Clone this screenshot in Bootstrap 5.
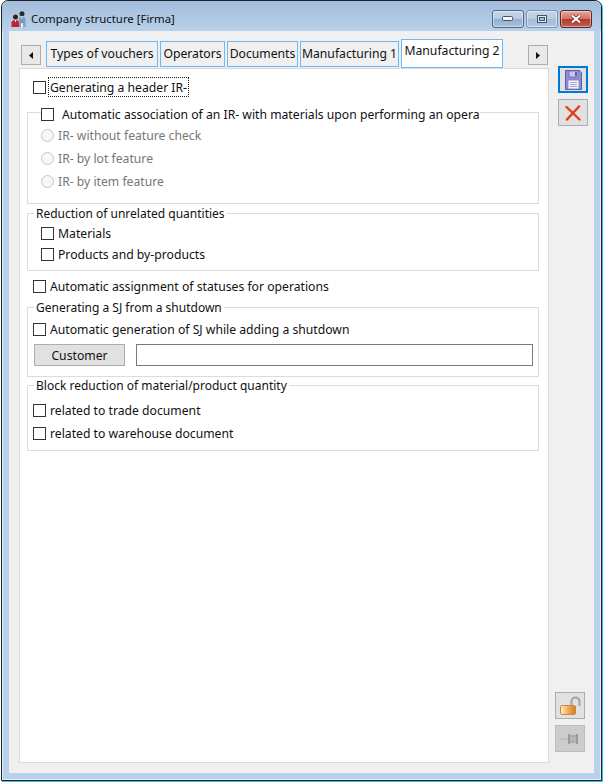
<!DOCTYPE html>
<html lang="en">
<head>
  <meta charset="UTF-8">
  <meta name="viewport" content="width=device-width, initial-scale=1.0">
  <title>Company structure [Firma]</title>
  <link href="https://cdn.jsdelivr.net/npm/bootstrap@5.3.2/dist/css/bootstrap.min.css" rel="stylesheet">
  <style>
    html,body{height:100%}
    body{background:#fff;color:#111;font-family:"Noto Sans",sans-serif;font-size:12.2px;line-height:18px;overflow:hidden}
    /* window frame */
    .win{width:601px;height:781px;margin-left:1px;border:1px solid #1d2128;border-radius:7px 7px 0 0;background:#b9d1ea;
      box-shadow:inset 0 0 0 1px #e8eef5,1px 1px 0 #35c4dc;padding:0 7px 6px 7px}
    .titlebar{height:30px;margin:0 -7px;padding:0 9px;border-radius:6px 6px 0 0;background:linear-gradient(#a3bddb,#b9d1ea)}
    .titlebar .ttl{margin-left:4px;margin-top:9px;font-size:11.4px}
    .cap-btn{width:32px;height:18px;border:1px solid #55677f;border-radius:3px;background:linear-gradient(#c8d8ea 0,#b4cae2 48%,#94b0d0 52%,#a9c2de 100%);box-shadow:inset 0 0 0 1px rgba(255,255,255,.45)}
    .cap-btn.cap-off{border-color:#7f93ac;background:linear-gradient(#c5d6e9 0,#b5cbe3 50%,#a3bcd9 52%,#b2c9e2 100%)}
    .cap-btn.cap-x{border-color:#5b2222;background:linear-gradient(#e3a79e 0,#cf7468 48%,#b23a2c 52%,#c4604f 100%)}
    .caps{margin-top:9px;gap:2px}
    .client{height:742px;background:#f0f0f0;padding:0 0 10px 10px}
    /* tabs */
    .left-col{width:530px}
    .tabrow{height:37px;padding-top:8px}
    .arrow-btn{width:20px;height:20px;margin-top:6px;border:1px solid #adadad;background:#e8e8e8;padding:0}
    .arrow-btn.a-left{margin-left:2px;margin-right:5px}
    .arrow-btn.a-right{margin-right:1px}
    .tabs-strip{gap:2px;border:0;flex-wrap:nowrap}
    .tabs-strip .nav-link{height:26px;margin:2px 0 0;padding:0;border:1px solid #6db8f7;border-radius:0;background:#f0f0f0;color:#111;text-align:center;line-height:23px;white-space:nowrap;font-size:12.2px}
    .tabs-strip .nav-link.active{height:29px;margin-top:0;background:#fff;color:#111;border-color:#6db8f7;position:relative;z-index:2;line-height:21px}
    .tw1{width:112px}.tw2{width:65px}.tw3{width:71px}.tw4{width:99px}.tw5{width:102px}
    .page{height:695px;background:#fff;border:1px solid #d9d9d9;padding:0 9px 0 7px}
    /* form bits */
    .chk-row{display:flex;align-items:center;height:18px;white-space:nowrap}
    .chk-row > span{padding-top:2px}
    .form-check-input.box{width:13px;height:13px;margin:0 4px 0 0;flex:none;border:1px solid #333;border-radius:0;background-color:#fff}
    .form-check-input.rad{width:13px;height:13px;margin:0 4px 0 0;flex:none;border:1px solid #c6c6c6;background-color:#f7f7f7;opacity:1}
    .chk-row > span.focus-lbl{outline:1px dotted #222;padding:0 1px;margin-left:-1px;height:18px;line-height:20px}
    .off-txt{color:#777}
    .grp{border:1px solid #dcdcdc;padding:0;margin:0}
    .grp legend{float:none;width:auto;font-size:12px;line-height:14px;margin:0 0 0 6px;padding:2px 2px 0}
    .grp legend.leg-chk{display:flex;align-items:center;margin-left:13px;padding:4px 0 0;line-height:16px;white-space:nowrap;font-size:12.2px}
    .grp legend.leg-chk .box{margin-right:8px}
    .grp legend.leg-chk span{padding-top:1px;height:16px;line-height:16px}
    .grp legend + *{clear:none}
    .top-row{margin:9px 0 0 6px}
    .g1{margin-top:6px}
    .g1 .g-in{padding:4px 0 13px 13px}
    .g1 .chk-row + .chk-row{margin-top:5px}
    .g2{margin-top:1px}
    .g2 .g-in{padding:3px 0 7px 13px}
    .g2 .chk-row + .chk-row{margin-top:3px}
    .mid-row{margin:6px 0 0 6px}
    .g3{margin-top:4px}
    .g3 .g-in{padding:5px 5px 10px 5px}
    .cust-line{margin-top:6px;padding-left:1px;gap:11px}
    .cust-btn{width:91px;height:22px;padding:0;border:1px solid #adadad;border-radius:0;background:#e1e1e1;color:#111;font-size:12.2px;line-height:22px}
    .cust-inp{height:22px;padding:0 3px;border:1px solid #7a7a7a;border-radius:0;font-size:12px}
    .g4 .g-in{padding:8px 0 8px 5px}
    .g4 .chk-row + .chk-row{margin-top:5px}
    /* side tools */
    .side-col{width:45px}
    .tool-btn{width:30px;height:27px;padding:0;border:1px solid #adadad;border-radius:0;background:#e1e1e1;display:flex;align-items:center;justify-content:center}
    .tool-save{margin:35px 0 0 9px;border:2px solid #0078d7}
    .tool-cancel{margin:6px 0 0 9px}
    .tool-lock{margin:auto 0 0 6px}
    .tool-pin{margin:6px 0 11px 6px;background:#ccc;border-color:#bdbdbd}
  </style>
</head>
<body>
  <div class="win">
    <!-- TITLE BAR -->
    <div class="titlebar d-flex">
      <svg class="mt-auto mb-1" width="16" height="16" viewBox="0 0 16 16">
        <circle cx="4.500" cy="6" r="2.500" fill="#3a1f1a"/>
        <path d="M.5 16V11.500C.5 10 2.200 9 4.500 9S8 10 8 11.500V16z" fill="#c5202c"/>
        <path d="M3.700 9h1.600l-.8 2.500z" fill="#fff"/>
        <circle cx="11" cy="2.800" r="2.500" fill="#2a2a2a"/>
        <path d="M8 16V8C8 6.500 9.200 5.800 11 5.800s3.500.7 3.500 2.200V16z" fill="#7f9fc0"/>
        <path d="M10 5.800h2V16h-2z" fill="#eef3f8"/>
        <path d="M10.600 6.500h.8l.3 5-.7 1-.7-1z" fill="#2b5f96"/>
      </svg>
      <span class="ttl">Company structure [Firma]</span>
      <div class="caps ms-auto d-flex">
        <div class="cap-btn d-flex align-items-center justify-content-center">
          <svg width="12" height="6" viewBox="0 0 12 6"><rect x=".5" y=".5" width="10" height="4" rx="1" fill="#f4f6f9" stroke="#44546a"/></svg>
        </div>
        <div class="cap-btn cap-off d-flex align-items-center justify-content-center">
          <svg width="11" height="9" viewBox="0 0 11 9"><rect x=".5" y=".5" width="9" height="7" fill="#e4ebf3" stroke="#44546a"/><rect x="2.500" y="2.500" width="5" height="3" fill="#a9bfd8" stroke="#44546a"/></svg>
        </div>
        <div class="cap-btn cap-x d-flex align-items-center justify-content-center">
          <svg width="14" height="10" viewBox="0 0 14 10"><path d="M3 1.500l8 7M11 1.500l-8 7" stroke="#5d2a2a" stroke-width="3.600"/><path d="M3 1.500l8 7M11 1.500l-8 7" stroke="#fff" stroke-width="2.200"/></svg>
        </div>
      </div>
    </div>

    <!-- CLIENT -->
    <div class="client d-flex">
      <div class="left-col d-flex flex-column">
        <div class="tabrow d-flex">
          <button class="arrow-btn a-left d-flex align-items-center justify-content-center">
            <svg width="4" height="7" viewBox="0 0 4 7"><path d="M4 0v7L0 3.500z" fill="#111"/></svg>
          </button>
          <ul class="nav nav-tabs tabs-strip">
            <li class="nav-item"><a class="nav-link tw1" href="#">Types of vouchers</a></li>
            <li class="nav-item"><a class="nav-link tw2" href="#">Operators</a></li>
            <li class="nav-item"><a class="nav-link tw3" href="#">Documents</a></li>
            <li class="nav-item"><a class="nav-link tw4" href="#">Manufacturing 1</a></li>
            <li class="nav-item"><a class="nav-link tw5 active" href="#">Manufacturing 2</a></li>
          </ul>
          <button class="arrow-btn a-right ms-auto d-flex align-items-center justify-content-center">
            <svg width="4" height="7" viewBox="0 0 4 7"><path d="M0 0v7l4-3.500z" fill="#111"/></svg>
          </button>
        </div>

        <div class="page">
          <div class="chk-row top-row">
            <input class="form-check-input box" type="checkbox">
            <span class="focus-lbl">Generating a header IR-</span>
          </div>

          <fieldset class="grp g1">
            <legend class="leg-chk"><input class="form-check-input box" type="checkbox"><span>Automatic association of an IR- with materials upon performing an opera</span></legend>
            <div class="g-in">
              <div class="chk-row off-txt"><input class="form-check-input rad" type="radio" disabled><span>IR- without feature check</span></div>
              <div class="chk-row off-txt"><input class="form-check-input rad" type="radio" disabled><span>IR- by lot feature</span></div>
              <div class="chk-row off-txt"><input class="form-check-input rad" type="radio" disabled><span>IR- by item feature</span></div>
            </div>
          </fieldset>

          <fieldset class="grp g2">
            <legend>Reduction of unrelated quantities</legend>
            <div class="g-in">
              <div class="chk-row"><input class="form-check-input box" type="checkbox"><span>Materials</span></div>
              <div class="chk-row"><input class="form-check-input box" type="checkbox"><span>Products and by-products</span></div>
            </div>
          </fieldset>

          <div class="chk-row mid-row">
            <input class="form-check-input box" type="checkbox">
            <span>Automatic assignment of statuses for operations</span>
          </div>

          <fieldset class="grp g3">
            <legend>Generating a SJ from a shutdown</legend>
            <div class="g-in">
              <div class="chk-row"><input class="form-check-input box" type="checkbox"><span>Automatic generation of SJ while adding a shutdown</span></div>
              <div class="cust-line d-flex">
                <button class="btn cust-btn flex-shrink-0">Customer</button>
                <input class="form-control cust-inp" type="text">
              </div>
            </div>
          </fieldset>

          <fieldset class="grp g4">
            <legend>Block reduction of material/product quantity</legend>
            <div class="g-in">
              <div class="chk-row"><input class="form-check-input box" type="checkbox"><span>related to trade document</span></div>
              <div class="chk-row"><input class="form-check-input box" type="checkbox"><span>related to warehouse document</span></div>
            </div>
          </fieldset>
        </div>
      </div>

      <!-- SIDE TOOLS -->
      <div class="side-col d-flex flex-column">
        <button class="tool-btn tool-save">
          <svg width="17" height="20" viewBox="0 0 17 20">
            <path d="M.5 .5h14l2 2v17H.5z" fill="#8f8fd8" stroke="#5a5aa8"/>
            <rect x="4" y="1" width="9" height="6" fill="#c7c7ee" stroke="#6a6ab4" stroke-width=".8"/>
            <rect x="10" y="2" width="2" height="4" fill="#5a5aa8"/>
            <rect x="3" y="10" width="11" height="9" fill="#f2f2fb" stroke="#7a7ac0" stroke-width=".8"/>
            <path d="M5 12.500h7M5 14.500h7M5 16.500h7" stroke="#a9a9d8"/>
          </svg>
        </button>
        <button class="tool-btn tool-cancel">
          <svg width="16" height="16" viewBox="0 0 16 16"><path d="M1.500 2l13 12.500M14 1.500L2 14.500" stroke="#e53a17" stroke-width="2.400" stroke-linecap="round"/></svg>
        </button>
        <button class="tool-btn tool-lock">
          <svg width="22" height="19" viewBox="0 0 22 19">
            <defs><linearGradient id="lockg"><stop offset="0" stop-color="#fdf0c6"/><stop offset=".55" stop-color="#f0a653"/><stop offset="1" stop-color="#d8792c"/></linearGradient></defs>
            <path d="M12.500 10V5.500a4 4 0 0 1 8 0V10" fill="none" stroke="#a3a3a3" stroke-width="2"/>
            <rect x="1.500" y="9.500" width="15" height="9" rx="1.500" fill="url(#lockg)" stroke="#c58a3c"/>
          </svg>
        </button>
        <button class="tool-btn tool-pin">
          <svg width="20" height="14" viewBox="0 0 20 14">
            <path d="M0 7h9" stroke="#b0b0b0"/>
            <path d="M9 2v10M17 2v10" stroke="#8c8c8c" stroke-width="1.500"/>
            <path d="M9 4h8M9 10h8" stroke="#8c8c8c"/>
            <path d="M11 5v4M13 5v4M15 5v4" stroke="#a0a0a0"/>
          </svg>
        </button>
      </div>
    </div>
  </div>
  <script src="https://cdn.jsdelivr.net/npm/bootstrap@5.3.2/dist/js/bootstrap.bundle.min.js"></script>
</body>
</html>
